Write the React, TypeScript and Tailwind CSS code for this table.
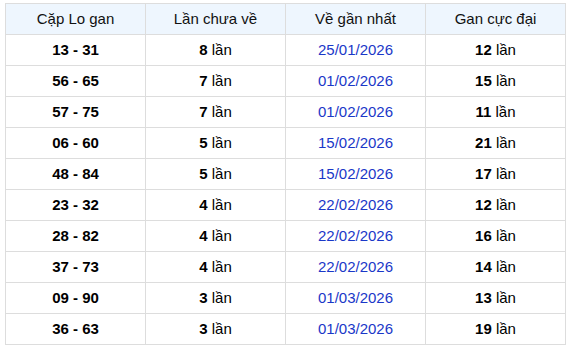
const rows = [
  { pair: '13 - 31', miss: 8, last: '25/01/2026', max: 12 },
  { pair: '56 - 65', miss: 7, last: '01/02/2026', max: 15 },
  { pair: '57 - 75', miss: 7, last: '01/02/2026', max: 11 },
  { pair: '06 - 60', miss: 5, last: '15/02/2026', max: 21 },
  { pair: '48 - 84', miss: 5, last: '15/02/2026', max: 17 },
  { pair: '23 - 32', miss: 4, last: '22/02/2026', max: 12 },
  { pair: '28 - 82', miss: 4, last: '22/02/2026', max: 16 },
  { pair: '37 - 73', miss: 4, last: '22/02/2026', max: 14 },
  { pair: '09 - 90', miss: 3, last: '01/03/2026', max: 13 },
  { pair: '36 - 63', miss: 3, last: '01/03/2026', max: 19 },
];

export default function App() {
  return (
    <div className="w-[570px] h-[350px] bg-white pt-[3px] pl-[5px] font-['Liberation_Sans',Arial,sans-serif] text-[15px] text-[#111]">
      <table className="w-[561px] border-collapse table-fixed text-center">
        <thead>
          <tr className="bg-[#eef6fe]">
            {['Cặp Lo gan', 'Lần chưa về', 'Về gần nhất', 'Gan cực đại'].map((h) => (
              <th key={h} className="h-[31px] p-0 border border-[#dddddd] font-normal">
                {h}
              </th>
            ))}
          </tr>
        </thead>
        <tbody>
          {rows.map((r) => (
            <tr key={r.pair}>
              <td className="h-[31px] p-0 border border-[#dddddd] font-bold text-black">{r.pair}</td>
              <td className="h-[31px] p-0 border border-[#dddddd] text-black">
                <b>{r.miss}</b> lần
              </td>
              <td className="h-[31px] p-0 border border-[#dddddd] text-[#1a38c8]">{r.last}</td>
              <td className="h-[31px] p-0 border border-[#dddddd] text-black">
                <b>{r.max}</b> lần
              </td>
            </tr>
          ))}
        </tbody>
      </table>
    </div>
  );
}
